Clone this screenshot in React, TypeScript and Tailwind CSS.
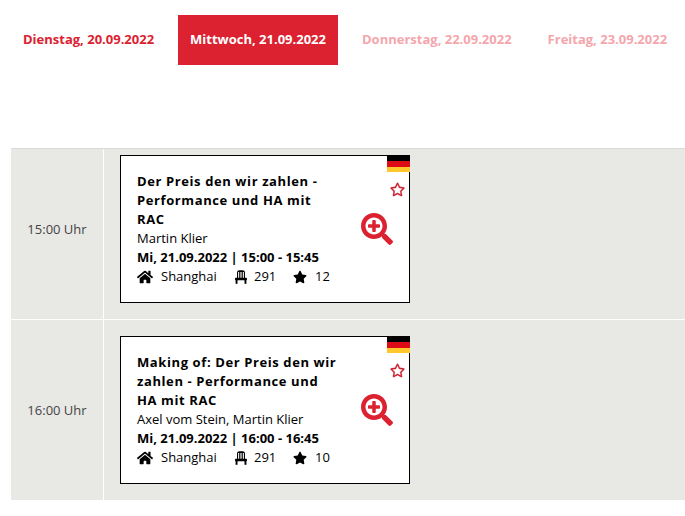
import { FaHome, FaRegStar, FaSearchPlus, FaStar } from "react-icons/fa";

const days = [
  { label: "Dienstag, 20.09.2022", className: "text-[#dc2130]" },
  { label: "Mittwoch, 21.09.2022", className: "bg-[#dc2130] text-white" },
  { label: "Donnerstag, 22.09.2022", className: "text-[#f4a6ad]" },
  { label: "Freitag, 23.09.2022", className: "text-[#f4a6ad]" },
];

const slots = [
  {
    time: "15:00 Uhr",
    rowClass: "h-[171px] border-t border-[#d9d9d5]",
    padClass: "pt-[6px]",
    title: ["Der Preis den wir zahlen -", "Performance und HA mit", "RAC"],
    speakers: "Martin Klier",
    date: "Mi, 21.09.2022 | 15:00 - 15:45",
    stars: 12,
  },
  {
    time: "16:00 Uhr",
    rowClass: "h-[180px]",
    padClass: "pt-[16px]",
    title: ["Making of: Der Preis den wir", "zahlen - Performance und", "HA mit RAC"],
    speakers: "Axel vom Stein, Martin Klier",
    date: "Mi, 21.09.2022 | 16:00 - 16:45",
    stars: 10,
  },
];

const Seat = () => (
  <svg viewBox="0 0 14 14" className="w-[14px] h-[14px]" fill="currentColor">
    <path d="M3 2.5 Q3 0.3 5.5 0.3 H8.5 Q11 0.3 11 2.5 V8 H9.9 V2 H8.8 V8 H7.6 V2 H6.4 V8 H5.2 V2 H4.1 V8 H3 Z" />
    <rect x="1" y="7.8" width="12" height="2.4" rx="0.7" />
    <rect x="1.6" y="10" width="1.9" height="3.8" />
    <rect x="10.5" y="10" width="1.9" height="3.8" />
  </svg>
);

const Flag = () => (
  <div className="absolute -top-px -right-px w-[23px] flex flex-col">
    <div className="h-[6px] bg-black" />
    <div className="h-[6px] bg-[#dd0b15]" />
    <div className="h-[5px] bg-[#ffc72c]" />
  </div>
);

export default function App() {
  return (
    <div className="w-[685px] h-[516px] bg-white overflow-hidden font-['Open_Sans',sans-serif]">
      <div className="flex gap-3 pl-[11px] pt-[15px] h-[148px]">
        {days.map((day) => (
          <div key={day.label} className={`h-[50px] px-3 flex items-center text-[13px] font-bold ${day.className}`}>
            {day.label}
          </div>
        ))}
      </div>

      <div className="ml-[11px] flex flex-col gap-px">
        {slots.map((slot) => (
          <div key={slot.time} className={`flex bg-[#e8e8e4] ${slot.rowClass}`}>
            <div className={`w-[93px] border-r border-white ${slot.padClass}`}>
              <div className="h-[148px] pt-[2px] flex items-center justify-center text-[13px] text-[#444]">
                {slot.time}
              </div>
            </div>
            <div className={`pl-[16px] ${slot.padClass}`}>
              <div className="relative w-[290px] h-[148px] bg-white border border-black pl-4 pt-[16px] text-black">
                <Flag />
                <FaRegStar
                  stroke="currentColor"
                  strokeWidth={10}
                  className="absolute right-[4px] top-[26px] w-[15px] h-[15px] text-[#c9202f]"
                />
                <FaSearchPlus className="absolute right-[16px] top-[57px] w-[32px] h-[32px] text-[#dc2130]" />
                <div className="text-[13px] leading-[19px] font-bold tracking-[0.6px]">
                  {slot.title.map((line) => (
                    <div key={line}>{line}</div>
                  ))}
                </div>
                <div className="text-[13px] leading-[19px]">{slot.speakers}</div>
                <div className="text-[13px] leading-[19px] font-bold">{slot.date}</div>
                <div className="flex items-center text-[13px] leading-[19px]">
                  <FaHome className="w-[16px] h-[16px]" />
                  <span className="ml-[8px] w-[62px]">Shanghai</span>
                  <span className="ml-[11px]"><Seat /></span>
                  <span className="ml-[6px] w-[39px]">291</span>
                  <FaStar className="w-[14px] h-[14px]" />
                  <span className="ml-[8px]">{slot.stars}</span>
                </div>
              </div>
            </div>
          </div>
        ))}
      </div>
    </div>
  );
}
